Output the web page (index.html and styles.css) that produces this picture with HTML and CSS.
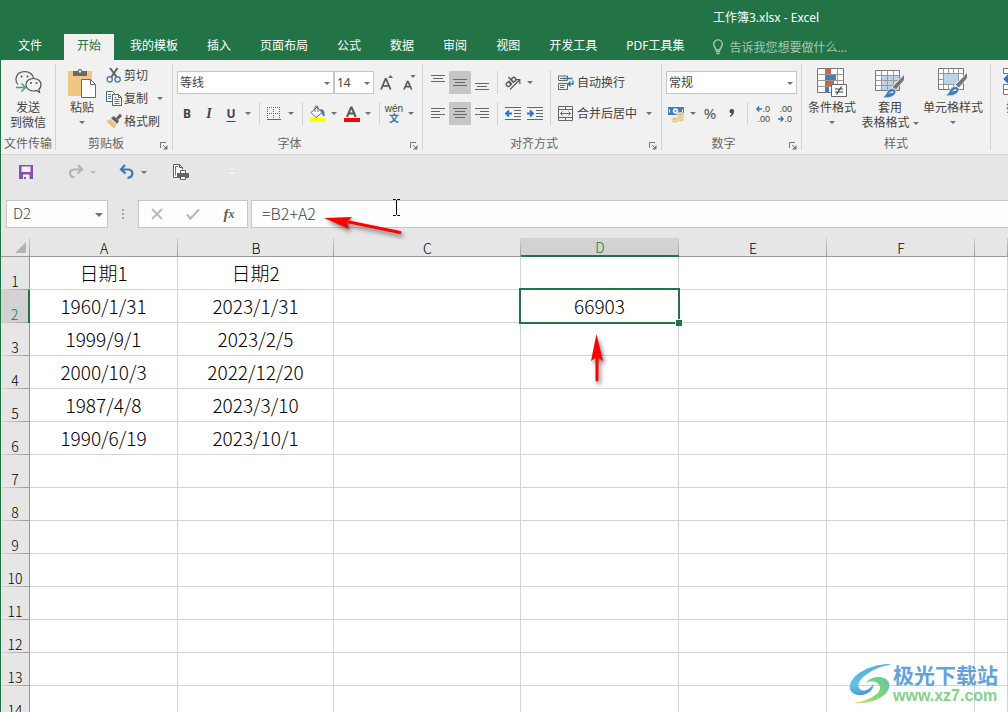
FILE: index.html
```html
<!DOCTYPE html>
<html lang="zh-CN">
<head>
<meta charset="utf-8">
<title>工作簿3.xlsx - Excel</title>
<link rel="stylesheet" href="styles.css">
</head>
<body>
<header class="titlebar">
  <h1 class="title">工作簿3.xlsx - Excel</h1>
  <nav class="tabs">
    <button class="tab tab-file">文件</button>
    <button class="tab tab-active">开始</button>
    <button class="tab">我的模板</button>
    <button class="tab">插入</button>
    <button class="tab">页面布局</button>
    <button class="tab">公式</button>
    <button class="tab">数据</button>
    <button class="tab">审阅</button>
    <button class="tab">视图</button>
    <button class="tab">开发工具</button>
    <button class="tab">PDF工具集</button>
    <button class="tell-me">
      <svg width="12" height="16" viewBox="0 0 12 16" fill="none" stroke="#a3c9b2" stroke-width="1.4"><path d="M4 11C4 8.8 1.7 8 1.7 5.2A4.3 4.3 0 0 1 10.300 5.200C10.300 8 8 8.800 8 11Z"/><path d="M4 12.500h4M4.500 14.500h3"/></svg>
      <span>告诉我您想要做什么...</span>
    </button>
  </nav>
</header>

<main class="window">
<section class="ribbon">
  <div class="group">
    <div class="tools">
      <button class="big big-send">
        <svg width="28" height="30" viewBox="0 0 28 30" fill="none" stroke="#505050" stroke-width="1.200"><path d="M2.500 15C.8 11 2 4 10.500 3.500c5 0 8.500 3 9 6.500M3 15l1 1.500" /><path d="M19.500 10.500c-4.500 0-7.500 2.800-7.500 6.200s3 6.300 7.500 6.300c1 0 2-.1 3-.5l3 1.700-.7-3c1.500-1.200 2.200-2.700 2.200-4.500 0-3.400-3-6.200-7.500-6.200Z"/><path d="M2 19.500h9M7.500 15.500l4 4-4 4" stroke="#46a56c" stroke-width="1.500"/><g fill="#505050" stroke="none"><circle cx="7.500" cy="8.500" r="1"/><circle cx="13.500" cy="8.500" r="1"/><circle cx="17" cy="15" r="1"/><circle cx="22.500" cy="15" r="1"/></g></svg>
        <span>发送<br>到微信</span>
      </button>
    </div>
    <div class="footer"><span>文件传输</span></div>
  </div>

  <div class="group">
    <div class="tools">
      <button class="big big-paste">
        <svg width="30" height="30" viewBox="0 0 30 30"><path d="M1 3h24v25H1Z" fill="#eec781"/><path d="M6 8V3h4.500a2.600 2.600 0 0 1 5 0H20v5Z" fill="#686868"/><circle cx="13" cy="3.500" r="1.200" fill="#f1f1f1"/><path d="M14.500 11.500h9l5 5v13h-14Z" fill="#fff" stroke="#686868"/><path d="M23.500 11.500v5h5" fill="none" stroke="#686868"/></svg>
        <span>粘贴</span><i class="caret"></i>
      </button>
      <div class="stack">
        <button class="small">
          <svg width="16" height="16" viewBox="0 0 16 16" fill="none"><path d="M4 1l7 9.500M11.500 1L5 10.500" stroke="#606060" stroke-width="2"/><circle cx="3.700" cy="12.400" r="2.600" stroke="#4a7fb8" stroke-width="1.400"/><circle cx="11.600" cy="12.400" r="2.600" stroke="#4a7fb8" stroke-width="1.400"/></svg>
          <span>剪切</span>
        </button>
        <div class="pair">
          <button class="small">
            <svg width="16" height="16" viewBox="0 0 16 16" fill="#fff" stroke="#606060"><path d="M.5 1.500h6l2 2v8h-8Z"/><path d="M6.500 4.500h6l3 3v8h-9Z"/><path d="M12.500 4.500v3h3" fill="none"/><path d="M2 4.500h3M2 6.500h3M2 8.500h3M8.500 9.500h5M8.500 11.500h5M8.500 13.500h5M8.500 7.500h2" stroke="#4a7fb8"/></svg>
            <span>复制</span>
          </button>
          <button class="drop" aria-label="复制选项"><i class="caret"></i></button>
        </div>
        <button class="small">
          <svg width="16" height="16" viewBox="0 0 16 16"><path d="M0 8l5-2 6 5-3 4.500Z" fill="#eec07b"/><path d="M5 5l3-2 5 5-2 3Z" fill="#606060"/><path d="M10 5l4-4.500L16 3l-4 4Z" fill="#606060"/><path d="M4.500 6l6 5" stroke="#f1f1f1"/></svg>
          <span>格式刷</span>
        </button>
      </div>
    </div>
    <div class="footer"><span>剪贴板</span><button class="launcher" aria-label="剪贴板设置"><svg width="8" height="8" viewBox="0 0 8 8"><path d="M.5 6V.5H6M3 3l3 3" stroke="#777" fill="none"/><path d="M7.500 3v4.500H3Z" fill="#777"/></svg></button></div>
  </div>

  <div class="group">
    <div class="rows">
      <div class="row">
        <label class="pick pick-font"><select aria-label="字体"><option>等线</option></select></label>
        <label class="pick pick-size"><select aria-label="字号"><option>14</option></select></label>
        <button class="tool after-size" aria-label="增大字号"><svg width="16" height="18" viewBox="0 0 16 18"><path d="M2 15.500L6.500 5h.6l4.500 10.500M3.800 11.800h6" stroke="#5a5a5a" stroke-width="1.800" fill="none"/><path d="M9 4l2.500-3L14 4Z" fill="#2f75b5"/></svg></button>
        <button class="tool" aria-label="减小字号"><svg width="16" height="18" viewBox="0 0 16 18"><path d="M3 15.500L6.500 7.500h.6l3.500 8M4.300 12.700h5" stroke="#5a5a5a" stroke-width="1.700" fill="none"/><path d="M9.500 1l2.500 3L14.500 1Z" fill="#2f75b5"/></svg></button>
      </div>
      <div class="row">
        <button class="tool bold">B</button><button class="tool italic">I</button><button class="tool under">U</button><button class="drop" aria-label="下划线选项"><i class="caret"></i></button>
        <i class="sep sep-wide"></i>
        <button class="tool" aria-label="边框"><svg width="14" height="14" viewBox="0 0 14 14" stroke="#666" fill="none"><path d="M0 .5h14M0 6.500h14M.5 0v12M6.500 0v12M12.500 0v12" stroke-dasharray="1 1"/><path d="M0 12.500h14"/></svg></button><button class="drop" aria-label="边框选项"><i class="caret"></i></button>
        <i class="sep sep-wide"></i>
        <button class="tool" aria-label="填充颜色"><svg width="18" height="18" viewBox="0 0 18 18"><path d="M3 7.500L9 2l5 5.500-6 5Z" fill="#fff" stroke="#606060"/><path d="M7 7V2.500a1.500 1.500 0 0 1 3 0V7" fill="none" stroke="#606060"/><path d="M12 4c4 0 5 3 4.500 7-1.500 1-2-1-2.500-3Z" fill="#3f78b5"/><path d="M1 13h16v4H1Z" fill="#ffff00"/></svg></button><button class="drop" aria-label="填充选项"><i class="caret"></i></button>
        <button class="tool" aria-label="字体颜色"><svg width="18" height="18" viewBox="0 0 18 18"><path d="M5 12L9 2.500h.7L13.700 12M6.500 8.500h5.700" stroke="#5a5a5a" stroke-width="2" fill="none"/><path d="M2 13h16v4H2Z" fill="#f00"/></svg></button><button class="drop" aria-label="字体颜色选项"><i class="caret"></i></button>
        <i class="sep sep-wide"></i>
        <button class="tool phonetic"><span>wén</span><b>文</b></button><button class="drop" aria-label="拼音选项"><i class="caret"></i></button>
      </div>
    </div>
    <div class="footer"><span>字体</span><button class="launcher" aria-label="字体设置"><svg width="8" height="8" viewBox="0 0 8 8"><path d="M.5 6V.5H6M3 3l3 3" stroke="#777" fill="none"/><path d="M7.500 3v4.500H3Z" fill="#777"/></svg></button></div>
  </div>

  <div class="group">
    <div class="tools align">
      <div class="rows">
        <div class="row">
          <button class="tool" aria-label="顶端对齐"><svg width="14" height="16" viewBox="0 0 14 16" stroke="#666"><path d="M0 .5h14M2 3.500h10M0 6.500h14"/></svg></button><button class="tool pressed" aria-label="垂直居中"><svg width="14" height="16" viewBox="0 0 14 16" stroke="#666"><path d="M0 4.500h14M2 7.500h10M0 10.500h14"/></svg></button><button class="tool" aria-label="底端对齐"><svg width="14" height="16" viewBox="0 0 14 16" stroke="#666"><path d="M0 8.500h14M2 11.500h10M0 14.500h14"/></svg></button>
          <i class="sep"></i>
          <button class="tool" aria-label="方向"><svg width="18" height="18" viewBox="0 0 18 18" fill="none" stroke="#5a5a5a" stroke-width="1.400"><g transform="rotate(-42 7 8)"><circle cx="3.500" cy="8" r="2.100"/><path d="M6 5.500v5M8.500 2.500v8"/><circle cx="10.700" cy="8" r="2.100"/></g><path d="M6 15.500L15.500 6M11.500 5.700h4.300V10" stroke-width="1.200"/></svg></button><button class="drop" aria-label="方向选项"><i class="caret"></i></button>
        </div>
        <div class="row">
          <button class="tool" aria-label="左对齐"><svg width="14" height="14" viewBox="0 0 14 14" stroke="#666"><path d="M0 1.500h14M0 4.500h9M0 7.500h14M0 10.500h9"/></svg></button><button class="tool pressed" aria-label="居中"><svg width="14" height="14" viewBox="0 0 14 14" stroke="#666"><path d="M0 1.500h14M2 4.500h10M0 7.500h14M2 10.500h10"/></svg></button><button class="tool" aria-label="右对齐"><svg width="14" height="14" viewBox="0 0 14 14" stroke="#666"><path d="M0 1.500h14M5 4.500h9M0 7.500h14M5 10.500h9"/></svg></button>
          <i class="sep"></i>
          <button class="tool" aria-label="减少缩进量"><svg width="16" height="14" viewBox="0 0 16 14" stroke="#666" fill="none"><path d="M0 .5h16M9 3.500h7M9 6.500h7M9 9.500h7M0 12.500h16"/><path d="M7 6.500H1M4 3.500l-3 3 3 3" stroke="#2f75b5" stroke-width="1.800"/></svg></button><button class="tool" aria-label="增加缩进量"><svg width="16" height="14" viewBox="0 0 16 14" stroke="#666" fill="none"><path d="M0 .5h16M9 3.500h7M9 6.500h7M9 9.500h7M0 12.500h16"/><path d="M0 6.500h6M3 3.500l3 3-3 3" stroke="#2f75b5" stroke-width="1.800"/></svg></button>
        </div>
      </div>
      <i class="sep sep-tall"></i>
      <div class="rows">
        <button class="small wide"><svg width="16" height="16" viewBox="0 0 16 16" fill="none" stroke="#666"><path d="M.5 1v4.500h9V1ZM.5 8.500h9v6h-9ZM2 3.500h5M2 10.500h5M2 12.500h4"/><path d="M5 3.500h9.500M15 5.500v3.500h-4.500M12.500 6.500L10.300 9l2.200 2.500" stroke="#2f75b5" stroke-width="1.300"/></svg><span>自动换行</span></button>
        <div class="pair">
          <button class="small wide"><svg width="16" height="16" viewBox="0 0 16 16" fill="none" stroke="#666"><path d="M.5.5h14v14H.5ZM.5 3.500h14M.5 11.500h14M7.500.5v3M7.500 11.500v3"/><path d="M2 7.500h11M4.500 5.500l-2 2 2 2M10.500 5.500l2 2-2 2" stroke="#2f75b5"/></svg><span>合并后居中</span></button>
          <button class="drop" aria-label="合并选项"><i class="caret"></i></button>
        </div>
      </div>
    </div>
    <div class="footer"><span>对齐方式</span><button class="launcher" aria-label="对齐设置"><svg width="8" height="8" viewBox="0 0 8 8"><path d="M.5 6V.5H6M3 3l3 3" stroke="#777" fill="none"/><path d="M7.500 3v4.500H3Z" fill="#777"/></svg></button></div>
  </div>

  <div class="group">
    <div class="rows">
      <div class="row">
        <label class="pick pick-format"><select aria-label="数字格式"><option>常规</option></select></label>
      </div>
      <div class="row">
        <button class="tool" aria-label="会计数字格式"><svg width="18" height="18" viewBox="0 0 18 18"><path d="M1 2h16v8H1Z" fill="#3f7fc0"/><path d="M2.500 4.500v3M15.500 4.500v3" stroke="#fff"/><circle cx="8.500" cy="6" r="2.700" fill="#fff"/><circle cx="8.500" cy="6" r="1" fill="#3f7fc0"/><g fill="#ecc27b" stroke="#f1f1f1" stroke-width=".7"><ellipse cx="13.500" cy="14.500" rx="3.800" ry="2"/><ellipse cx="13.500" cy="12" rx="3.800" ry="2"/><ellipse cx="13.500" cy="9.500" rx="3.800" ry="2"/><ellipse cx="8" cy="16" rx="3.500" ry="1.700"/><ellipse cx="8" cy="13.800" rx="3.500" ry="1.700"/></g></svg></button><button class="drop" aria-label="会计选项"><i class="caret"></i></button>
        <button class="tool percent">%</button><button class="tool" aria-label="千位分隔样式"><svg width="6" height="10" viewBox="0 0 6 10"><path d="M3 0a2 2 0 0 1 2 2.300C5 5 3.500 7 1 8L.7 7C2 6.300 2.600 5.400 2.500 4.400A2.200 2.200 0 0 1 3 0Z" fill="#505050"/></svg></button>
        <i class="sep"></i>
        <button class="tool decimals" aria-label="增加小数位数"><span><svg width="6" height="6" viewBox="0 0 6 6" fill="none" stroke="#2f75b5" stroke-width="1.400"><path d="M6 3H1M3.200.5L.9 3l2.300 2.500"/></svg>.0</span><span>.00</span></button><button class="tool decimals" aria-label="减少小数位数"><span>.00</span><span><svg width="6" height="6" viewBox="0 0 6 6" fill="none" stroke="#2f75b5" stroke-width="1.400"><path d="M0 3h5M2.800.5L5.100 3 2.800 5.500"/></svg>.0</span></button>
      </div>
    </div>
    <div class="footer"><span>数字</span><button class="launcher" aria-label="数字设置"><svg width="8" height="8" viewBox="0 0 8 8"><path d="M.5 6V.5H6M3 3l3 3" stroke="#777" fill="none"/><path d="M7.500 3v4.500H3Z" fill="#777"/></svg></button></div>
  </div>

  <div class="group">
    <div class="tools styles">
      <button class="big">
        <svg width="30" height="30" viewBox="0 0 30 30"><path d="M.5.500h26v24H.5Z" fill="#fff" stroke="#777"/><path d="M.5 6.500h26M.5 12.500h26M.5 18.500h26M8.500.500v24M20.500.500v24" stroke="#999"/><path d="M8 1h6v5H8ZM8 13h9v5H8Z" fill="#d9603f"/><path d="M8 7h11v5H8ZM8 19h4v5H8Z" fill="#3f7fc0"/><path d="M14.500 16.500h15v12h-15Z" fill="#fff" stroke="#666"/><path d="M18 21h8M18 24h8M24.500 18.500l-5 8" stroke="#404040" stroke-width="1.200"/></svg>
        <span>条件格式</span><i class="caret"></i>
      </button>
      <button class="big">
        <svg width="30" height="30" viewBox="0 0 30 30"><path d="M.5 2.500h24v20H.5Z" fill="#fff" stroke="#777"/><path d="M7 8h17v14H7Z" fill="#bdd3ea"/><path d="M.5 7.500h24M.5 12.500h24M.5 17.500h24M6.500 2.500v20M12.500 2.500v20M18.500 2.500v20" stroke="#999"/><path d="M29.500 6v6l-8.500 10-4-3Z" fill="#777" stroke="#f1f1f1"/><path d="M7 29.500c5-1 4-9 10-9 5 0 5 5 1 7.500-3 2-7 2-11 1.500Z" fill="#3f7fc0" stroke="#f1f1f1" stroke-width=".7"/><path d="M13.500 25.500l4-2.500 1 1.500Z" fill="#fff"/></svg>
        <span>套用<br>表格格式 <i class="caret"></i></span>
      </button>
      <button class="big big-cell">
        <svg width="30" height="30" viewBox="0 0 30 30"><path d="M.5.500h25v21H.5Z" fill="#fff" stroke="#777"/><path d="M.5 5.500h25M.5 16.500h25M5.500.500v21M20.500.500v21M10.500.500v5M15.500.500v5M10.500 16.500v5M15.500 16.500v5M.5 11.500h5" stroke="#999"/><path d="M6 6h14v10H6Z" fill="#bdd3ea"/><path d="M29.500 4v6l-8.500 10-4-3Z" fill="#777" stroke="#f1f1f1"/><path d="M7 27.500c5-1 4-9 10-9 5 0 5 5 1 7.500-3 2-7 2-11 1.500Z" fill="#3f7fc0" stroke="#f1f1f1" stroke-width=".7"/><path d="M13.500 23.500l4-2.500 1 1.500Z" fill="#fff"/></svg>
        <span>单元格样式</span><i class="caret"></i>
      </button>
    </div>
    <div class="footer"><span>样式</span></div>
  </div>

  <div class="group group-cut">
    <div class="tools">
      <button class="big big-insert">
        <svg width="30" height="30" viewBox="0 0 30 30" fill="#fff" stroke="#777"><path d="M.5.500h22v5H.5ZM.5 16.500h22v10H.5ZM.5 21.500h22M7.500.500v5M7.500 16.500v10"/><path d="M13 11H2M6 7l-4 4 4 4" fill="none" stroke="#2f75b5" stroke-width="2.500"/></svg>
        <span>插入</span>
      </button>
    </div>
  </div>
</section>

<section class="quick">
  <button class="tool save" aria-label="保存"><svg width="14" height="14" viewBox="0 0 14 14"><path d="M0 0h14v14H0Z" fill="#8651ad"/><path d="M2.500 1.500h9V7h-9ZM4 9.500h6.500V14H4Z" fill="#f1f1f1"/><path d="M5 12h2v2H5Z" fill="#8651ad"/></svg></button>
  <button class="tool" aria-label="恢复"><svg width="16" height="16" viewBox="0 0 16 16" fill="none" stroke="#b3b3b3" stroke-width="2.200"><path d="M10 1l4 4.500-4.500 4M13.500 5.500H6C.5 5.500.5 13 6.500 13.500"/></svg></button><button class="drop faint" aria-label="恢复选项"><i class="caret"></i></button>
  <button class="tool undo" aria-label="撤消"><svg width="16" height="16" viewBox="0 0 16 16" fill="none" stroke="#3f78b5" stroke-width="2.200"><path d="M6 1L2 5.500l4.500 4M2.500 5.500H9c6 0 6 7.500-.5 8.500"/></svg></button><button class="drop" aria-label="撤消选项"><i class="caret"></i></button>
  <button class="tool print" aria-label="打印预览"><svg width="18" height="18" viewBox="0 0 18 18" fill="none" stroke="#606060"><path d="M5 14.500H1.500v-13h6l3 3v2M7.500 1.500v3h3" fill="#fff"/><path d="M3.500 12.500v-9H6" stroke="#4a7fb8"/><path d="M8.500 10.500v-3h5v3" fill="#fff"/><path d="M5.500 10.500h11v4h-11Z" fill="#666"/><path d="M8.500 13.500h5v3h-5Z" fill="#fff"/></svg></button>
  <button class="drop more" aria-label="自定义快速访问工具栏"><i class="bar"></i><i class="caret"></i></button>
</section>

<section class="formula">
  <label class="pick pick-name"><input type="text" value="D2" aria-label="名称框"></label>
  <i class="grip"></i>
  <div class="entry">
    <button aria-label="取消"><svg width="12" height="12" viewBox="0 0 12 12" stroke="#b8b8b8" stroke-width="1.800"><path d="M1 1l10 10M11 1L1 11"/></svg></button>
    <button aria-label="输入"><svg width="14" height="12" viewBox="0 0 14 12" fill="none" stroke="#b8b8b8" stroke-width="2.200"><path d="M1 6.500L4.500 10.500 13 1.500"/></svg></button>
    <button class="fx" aria-label="插入函数">f<small>x</small></button>
  </div>
  <input class="expression" type="text" value="=B2+A2" aria-label="编辑栏">
</section>

<section class="sheet">
  <table>
    <colgroup><col class="c-head"><col class="c-a"><col class="c-b"><col class="c-c"><col class="c-d"><col class="c-a"><col class="c-a"><col></colgroup>
    <thead><tr><th class="corner"><svg width="11" height="11" viewBox="0 0 11 11"><path d="M11 0v11H0Z" fill="#b4b4b4"/></svg></th><th>A</th><th>B</th><th>C</th><th class="col-on">D</th><th>E</th><th>F</th><th></th></tr></thead>
    <tbody>
      <tr><th>1</th><td>日期1</td><td>日期2</td><td></td><td></td><td></td><td></td><td></td></tr>
      <tr><th class="row-on">2</th><td>1960/1/31</td><td>2023/1/31</td><td></td><td class="active">66903</td><td></td><td></td><td></td></tr>
      <tr><th>3</th><td>1999/9/1</td><td>2023/2/5</td><td></td><td></td><td></td><td></td><td></td></tr>
      <tr><th>4</th><td>2000/10/3</td><td>2022/12/20</td><td></td><td></td><td></td><td></td><td></td></tr>
      <tr><th>5</th><td>1987/4/8</td><td>2023/3/10</td><td></td><td></td><td></td><td></td><td></td></tr>
      <tr><th>6</th><td>1990/6/19</td><td>2023/10/1</td><td></td><td></td><td></td><td></td><td></td></tr>
      <tr><th>7</th><td></td><td></td><td></td><td></td><td></td><td></td><td></td></tr>
      <tr><th>8</th><td></td><td></td><td></td><td></td><td></td><td></td><td></td></tr>
      <tr><th>9</th><td></td><td></td><td></td><td></td><td></td><td></td><td></td></tr>
      <tr><th>10</th><td></td><td></td><td></td><td></td><td></td><td></td><td></td></tr>
      <tr><th>11</th><td></td><td></td><td></td><td></td><td></td><td></td><td></td></tr>
      <tr><th>12</th><td></td><td></td><td></td><td></td><td></td><td></td><td></td></tr>
      <tr><th>13</th><td></td><td></td><td></td><td></td><td></td><td></td><td></td></tr>
      <tr><th>14</th><td></td><td></td><td></td><td></td><td></td><td></td><td></td></tr>
    </tbody>
  </table>
</section>
</main>

<svg class="arrow arrow-formula" width="90" height="30" viewBox="0 0 90 30"><path d="M29 12L80 22.500" stroke="#f00" stroke-width="3" stroke-linecap="round"/><path d="M4 8l28-1-5 5 2 7Z" fill="#f00"/></svg>
<svg class="arrow arrow-cell" width="24" height="56" viewBox="0 0 24 56"><path d="M12 24v25" stroke="#f00" stroke-width="3" stroke-linecap="round"/><path d="M11.500 3l6.500 27-6-4-6 4Z" fill="#f00"/></svg>
<svg class="beam" width="9" height="17" viewBox="0 0 9 17" fill="none" stroke="#000"><path d="M1 .5h2.500l1 1 1-1H8M4.500 1.500v14M1 16.500h2.500l1-1 1 1H8"/></svg>

<aside class="watermark">
  <svg width="44" height="42" viewBox="0 0 44 42"><defs><linearGradient id="swirl" x1="0" y1="0" x2=".4" y2="1"><stop offset="0" stop-color="#4f9be0"/><stop offset=".6" stop-color="#62c5e5"/><stop offset="1" stop-color="#4b8fd8"/></linearGradient><linearGradient id="leaf" x1="1" y1="0" x2="0" y2="1"><stop offset="0" stop-color="#5cc7a8"/><stop offset=".6" stop-color="#8ed66f"/><stop offset="1" stop-color="#e5e06a"/></linearGradient></defs><path d="M43 1C26 0 4 9 1 22c-2 9 9 13 18 8 4-2 6-6 5-9-3 6-11 9-14 4C7 18 19 6 43 1Z" fill="url(#swirl)"/><path d="M17 20c5-8 20-8 23 0 3 10-13 22-36 20 15-2 28-9 27-16-1-5-8-7-14-4Z" fill="url(#leaf)"/></svg>
  <div><strong>极光下载站</strong><span>www.xz7.com</span></div>
</aside>
</body>
</html>
```
FILE: styles.css
```css
* { box-sizing: border-box; }

body {
  margin: 0;
  height: 100vh;
  display: flex;
  flex-direction: column;
  overflow: hidden;
  position: relative;
  background: #fff;
  color: #444;
  font: 12px/15px "Noto Sans", "Noto Sans CJK SC", sans-serif;
}

button, select, input {
  margin: 0;
  padding: 0;
  border: 0;
  border-radius: 0;
  background: none;
  color: inherit;
  font: inherit;
}

svg { display: block; flex: none; }

/* Title bar and tabs */
.titlebar {
  flex: none;
  background: #227447;
  color: #fff;
}
.title {
  margin: 0;
  padding: 10px 0 9px 713px;
  font-size: 12px;
  line-height: 15px;
  font-weight: 400;
  white-space: nowrap;
}
.tabs {
  display: flex;
  gap: 3px;
  padding-left: 5px;
}
.tab {
  height: 26px;
  padding: 0 13px 4px;
  white-space: nowrap;
}
.tab-file { margin-right: 6px; }
.tab-active { background: #f1f1f1; color: #227447; }
.tell-me {
  display: flex;
  align-items: center;
  gap: 5px;
  margin-left: 12px;
  color: #a3c9b2;
  white-space: nowrap;
}

/* Ribbon */
.window {
  flex: 1;
  min-height: 0;
  display: flex;
  flex-direction: column;
  background: #e6e6e6;
  border-left: 1px solid #227447;
}
.ribbon {
  flex: none;
  display: flex;
  padding: 4px 0;
  background: #f1f1f1;
  border-bottom: 1px solid #d2d2d2;
}
.group {
  flex: none;
  display: flex;
  flex-direction: column;
  justify-content: space-between;
  height: 86px;
  border-right: 1px solid #d2d2d2;
}
.group-cut { border-right: 0; padding-left: 12px; }
.tools { display: flex; }
.footer {
  display: flex;
  line-height: 13px;
  color: #666;
}
.footer span { flex: 1; text-align: center; }
.launcher {
  width: 16px;
  display: flex;
  align-items: center;
  padding: 4px 0 0 4px;
}
.rows {
  display: flex;
  flex-direction: column;
  gap: 8px;
  padding: 7px 2px 0 3px;
}
.row, .pair { display: flex; }

.big {
  width: 58px;
  padding-top: 4px;
  display: flex;
  flex-direction: column;
  align-items: center;
  white-space: nowrap;
}
.big > span { margin-top: 2px; }
.big > .caret { margin-top: 6px; }
.big span .caret { display: inline-block; vertical-align: middle; }
.big-send { width: 54px; }
.big-paste { width: 44px; margin-left: 4px; }
.big-cell { width: 68px; }
.big-insert { width: 30px; }
.styles { padding: 0 3px 0 1px; }

.stack {
  display: flex;
  flex-direction: column;
  gap: 1px;
  width: 68px;
  padding: 0 6px 0 2px;
}
.small {
  display: flex;
  align-items: center;
  gap: 2px;
  height: 22px;
  white-space: nowrap;
}
.stack .pair { justify-content: space-between; }
.small.wide { height: 23px; gap: 3px; }
.small.wide + .drop { margin-left: 6px; }

.tool {
  display: flex;
  align-items: center;
  justify-content: center;
  width: 22px;
  height: 23px;
}
.drop {
  display: flex;
  align-items: center;
  justify-content: center;
  width: 12px;
  height: 23px;
}
.stack .drop { height: 22px; }
.caret {
  border: 3px solid transparent;
  border-top-color: #707070;
  border-bottom: 0;
}
.sep {
  width: 1px;
  height: 23px;
  margin: 0 4px;
  background: #d2d2d2;
}
.sep-wide { margin: 0 3px 0 5px; }
.sep-tall { height: 55px; margin: 6px 0 0; }
.pressed { background: #c6c6c6; }
.bold { font-weight: 700; }
.italic { font: italic 700 14px/15px "Liberation Serif", serif; }
.under { font-weight: 700; text-decoration: underline; text-underline-offset: 3px; }
.percent { font-size: 15px; color: #505050; }
.align .rows:first-child { padding: 7px 4px 0 4px; }
.align .rows:last-child { padding: 7px 6px 0 7px; }
.after-size { margin-left: 2px; }

.phonetic {
  flex-direction: column;
  font: 10px/10px "Liberation Sans", "Noto Sans CJK SC", sans-serif;
}
.phonetic b { color: #2f75b5; }
.decimals {
  flex-direction: column;
  align-items: flex-end;
  padding-right: 4px;
  font: 9px/10px "Liberation Sans", sans-serif;
}
.decimals span { display: flex; align-items: center; gap: 1px; }

/* Boxed fields with a drop-down caret */
.pick { position: relative; display: flex; }
.pick::after {
  content: "";
  position: absolute;
  right: 4px;
  top: 50%;
  margin-top: -1px;
  border: 3px solid transparent;
  border-top-color: #707070;
  border-bottom: 0;
  pointer-events: none;
}
.pick select, .pick input {
  appearance: none;
  width: 100%;
  height: 23px;
  padding: 0 2px;
  background: #fff;
  border: 1px solid #c6c6c6;
}
.pick-font { width: 157px; margin-left: 1px; }
.pick-size { width: 40px; }
.pick-format { width: 131px; margin: 0 2px 0 1px; }

/* Quick access bar */
.quick {
  flex: none;
  display: flex;
  align-items: center;
  height: 34px;
  padding-left: 14px;
}
.quick .save { margin-right: 28px; }
.quick .undo { margin-left: 17px; }
.quick .print { margin-left: 20px; }
.quick .more { margin-left: 34px; flex-direction: column; gap: 2px; }
.faint .caret { border-top-color: #bcbcbc; }
.more .caret { border-top-color: #f6f6f6; }
.more .bar { width: 6px; height: 1px; background: #f6f6f6; }

/* Formula bar */
.formula {
  flex: none;
  display: flex;
  padding: 11px 0 10px 5px;
  font-family: "Noto Sans CJK SC", sans-serif;
  font-size: 15px;
  font-weight: 300;
}
.pick-name { width: 102px; }
.pick-name::after { border-width: 4px; border-bottom: 0; right: 5px; }
.pick-name input { height: 28px; padding: 0 0 3px 6px; background: #fdfdfd; }
.grip {
  width: 2px;
  height: 10px;
  margin: 9px 14px 0 14px;
  background: repeating-linear-gradient(#a6a6a6 0 2px, transparent 2px 4px);
}
.entry {
  display: flex;
  width: 110px;
  height: 28px;
  margin-right: 3px;
  background: #fdfdfd;
  border: 1px solid #c6c6c6;
}
.entry button {
  flex: 1;
  display: flex;
  align-items: center;
  justify-content: center;
}
.entry .fx { font: italic 700 15px/15px "Liberation Serif", serif; color: #606060; }
.fx small { font-size: 12px; }
.expression {
  flex: 1;
  min-width: 0;
  height: 28px;
  padding: 0 0 3px 10px;
  background: #fdfdfd;
  border: 1px solid #c6c6c6;
  border-right: 0;
  font-size: 16px;
}

/* Sheet */
.sheet { flex: 1; min-height: 0; overflow: hidden; }
.sheet table {
  width: 100%;
  table-layout: fixed;
  border-collapse: separate;
  border-spacing: 0;
  font-family: "Noto Sans CJK SC", sans-serif;
  font-weight: 300;
  color: #000;
}
.c-head { width: 29px; }
.c-a { width: 148px; }
.c-b { width: 156px; }
.c-c { width: 187px; }
.c-d { width: 158px; }
.sheet th {
  padding: 0;
  font-size: 14px;
  font-weight: 300;
  line-height: 16px;
  vertical-align: bottom;
}
.sheet thead th {
  height: 19px;
  border-bottom: 1px solid #999;
  background: linear-gradient(#d0d0d0, #999) right / 1px 100% no-repeat;
}
.sheet thead .corner { padding: 0 4px 3px 14px; }
.sheet thead .col-on {
  color: #227447;
  background-color: #d2d2d2;
  border-bottom: 2px solid #227447;
}
.sheet td {
  position: relative;
  height: 33px;
  padding: 0;
  background: #fff;
  border-right: 1px solid #d4d4d4;
  border-bottom: 1px solid #d4d4d4;
  font-size: 19px;
  line-height: 24px;
  text-align: center;
}
.sheet tbody th {
  padding-bottom: 1px;
  border-right: 1px solid #999;
  background: linear-gradient(to right, #d8d8d8, #999) bottom / 100% 1px no-repeat #e6e6e6;
}
.sheet tbody .row-on {
  color: #227447;
  background-color: #d2d2d2;
  border-right: 2px solid #227447;
}
.sheet .active { z-index: 1; }
.active::before {
  content: "";
  position: absolute;
  inset: -2px;
  border: 2px solid #227447;
}
.active::after {
  content: "";
  position: absolute;
  right: -4px;
  bottom: -4px;
  width: 6px;
  height: 6px;
  background: #227447;
  border: solid #fff;
  border-width: 1px 0 0 1px;
}

/* Annotations over the sheet */
.arrow { position: absolute; filter: drop-shadow(2px 3px 2px rgb(0 0 0 / 50%)); }
.arrow-formula { left: 320px; top: 210px; }
.arrow-cell { left: 585px; top: 331px; }
.beam { position: absolute; left: 392px; top: 199px; }

.watermark {
  position: absolute;
  right: 10px;
  bottom: 6px;
  display: flex;
  align-items: center;
  font-family: "Noto Sans CJK SC", sans-serif;
}
.watermark div { display: flex; flex-direction: column; }
.watermark strong { color: #62a3dc; font-size: 21px; line-height: 24px; }
.watermark span {
  color: #86cf8d;
  font: 700 16px/20px "Liberation Sans", sans-serif;
}
```
